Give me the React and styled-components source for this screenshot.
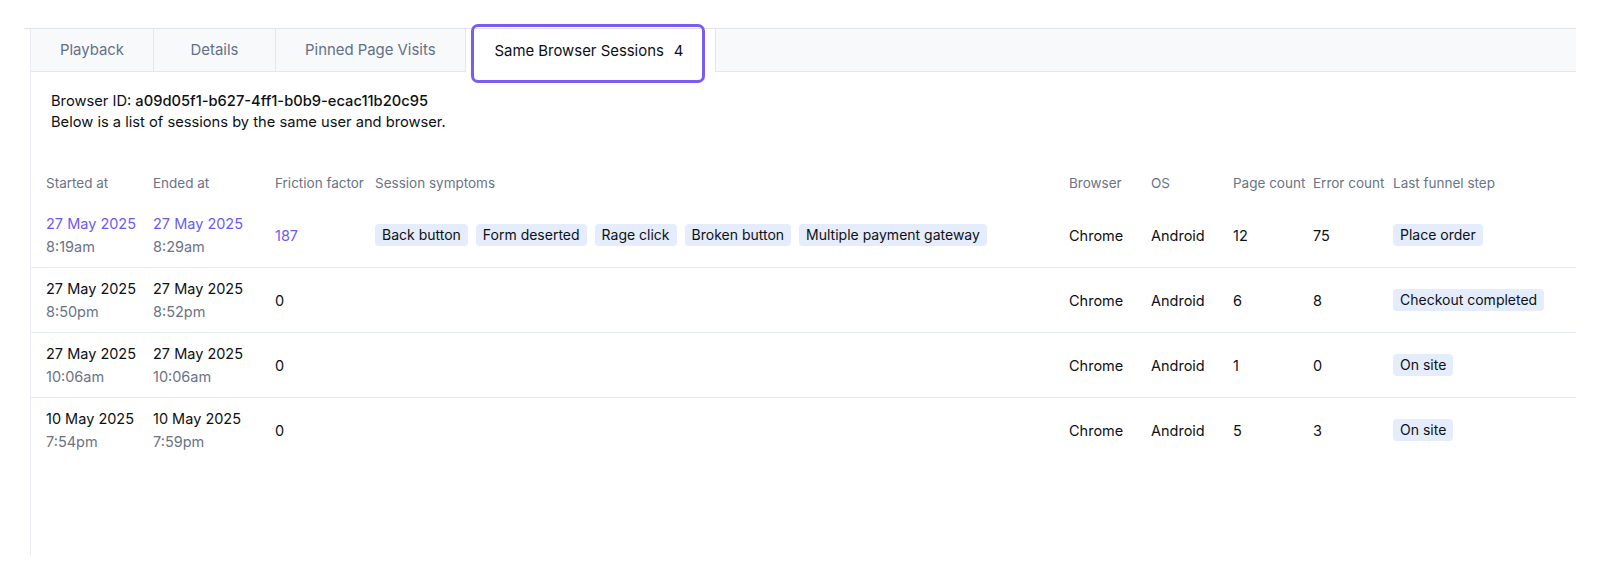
import React from 'react';
import styled, { createGlobalStyle } from 'styled-components';

const GlobalStyle = createGlobalStyle`
  body {
    margin: 0;
    background: #ffffff;
    font-family: Inter, "Noto Sans", sans-serif;
    color: #0d1015;
  }
`;

const tabs = [
  { label: 'Playback' },
  { label: 'Details' },
  { label: 'Pinned Page Visits' },
  { label: 'Same Browser Sessions', count: 4, active: true },
];

const columns = [
  'Started at',
  'Ended at',
  'Friction factor',
  'Session symptoms',
  'Browser',
  'OS',
  'Page count',
  'Error count',
  'Last funnel step',
];

const sessions = [
  {
    startDate: '27 May 2025', startTime: '8:19am',
    endDate: '27 May 2025', endTime: '8:29am',
    friction: 187, highlight: true,
    symptoms: ['Back button', 'Form deserted', 'Rage click', 'Broken button', 'Multiple payment gateway'],
    browser: 'Chrome', os: 'Android', pages: 12, errors: 75, step: 'Place order',
  },
  {
    startDate: '27 May 2025', startTime: '8:50pm',
    endDate: '27 May 2025', endTime: '8:52pm',
    friction: 0, symptoms: [],
    browser: 'Chrome', os: 'Android', pages: 6, errors: 8, step: 'Checkout completed',
  },
  {
    startDate: '27 May 2025', startTime: '10:06am',
    endDate: '27 May 2025', endTime: '10:06am',
    friction: 0, symptoms: [],
    browser: 'Chrome', os: 'Android', pages: 1, errors: 0, step: 'On site',
  },
  {
    startDate: '10 May 2025', startTime: '7:54pm',
    endDate: '10 May 2025', endTime: '7:59pm',
    friction: 0, symptoms: [],
    browser: 'Chrome', os: 'Android', pages: 5, errors: 3, step: 'On site',
  },
];

function App() {
  return (
    <>
      <GlobalStyle />
      <Page>
        <Frame>
          <Panel>
            <TabBar>
              {tabs.map((tab) => (
                <Tab key={tab.label} $active={tab.active}>
                  {tab.label}
                  {tab.count !== undefined && <TabCount>{tab.count}</TabCount>}
                  {tab.active && <FocusRing />}
                </Tab>
              ))}
            </TabBar>

            <Intro>
              <div>Browser ID: <strong>a09d05f1-b627-4ff1-b0b9-ecac11b20c95</strong></div>
              <div>Below is a list of sessions by the same user and browser.</div>
            </Intro>

            <Table>
              <HeadRow>
                {columns.map((c) => (
                  <HeadCell key={c}>{c}</HeadCell>
                ))}
              </HeadRow>
              {sessions.map((s, i) => (
                <Row key={i}>
                  <Cell>
                    <DateLine $highlight={s.highlight}>{s.startDate}</DateLine>
                    <TimeLine>{s.startTime}</TimeLine>
                  </Cell>
                  <Cell>
                    <DateLine $highlight={s.highlight}>{s.endDate}</DateLine>
                    <TimeLine>{s.endTime}</TimeLine>
                  </Cell>
                  <Cell>
                    <Friction $highlight={s.highlight}>{s.friction}</Friction>
                  </Cell>
                  <Cell>
                    <Badges>
                      {s.symptoms.map((sym) => (
                        <Badge key={sym}>{sym}</Badge>
                      ))}
                    </Badges>
                  </Cell>
                  <Cell>{s.browser}</Cell>
                  <Cell>{s.os}</Cell>
                  <Cell>{s.pages}</Cell>
                  <Cell>{s.errors}</Cell>
                  <Cell>
                    <Badge>{s.step}</Badge>
                  </Cell>
                </Row>
              ))}
            </Table>
          </Panel>
        </Frame>
      </Page>
    </>
  );
}

const Page = styled.div`
  padding: 28px 24px 0 24px;
`;

const Frame = styled.div`
  border-top: 1px solid #dfe3e8;
  padding-left: 6px;
`;

const Panel = styled.div`
  border-left: 1px solid #e9edf3;
  height: 526px;
`;

const TabBar = styled.div`
  display: flex;
  height: 42px;
  background: #f8f9fb;
  border-bottom: 1px solid #e3e8ef;
`;

const Tab = styled.div`
  position: relative;
  display: flex;
  align-items: center;
  justify-content: center;
  gap: 10px;
  min-width: 122px;
  padding: 0 29px;
  box-sizing: border-box;
  border-right: 1px solid #e3e8ef;
  font-size: 14.9px;
  color: ${(props) => (props.$active ? '#0d1015' : '#64708a')};
  background: ${(props) => (props.$active ? '#ffffff' : 'transparent')};
  margin-bottom: ${(props) => (props.$active ? '-1px' : '0')};
`;

const TabCount = styled.span`
  color: #0d1015;
  margin-right: 3px;
`;

const FocusRing = styled.span`
  position: absolute;
  left: 5px;
  right: 10px;
  top: -5px;
  bottom: -11px;
  border: 3px solid #7b5cf2;
  border-radius: 7px;
  pointer-events: none;
`;

const Intro = styled.div`
  padding: 19px 0 0 20px;
  font-size: 14.7px;
  line-height: 21px;
  color: #0d1015;

  strong {
    font-weight: 500;
  }
`;

const gridColumns = '107px 122px 100px 694px 82px 82px 80px 80px 1fr';

const Table = styled.div`
  margin-top: 30px;
`;

const HeadRow = styled.div`
  display: grid;
  grid-template-columns: ${gridColumns};
  align-items: center;
  height: 40px;
  padding-left: 15px;
`;

const HeadCell = styled.div`
  font-size: 13.5px;
  color: #6b7487;
  white-space: nowrap;
`;

const Row = styled.div`
  display: grid;
  grid-template-columns: ${gridColumns};
  align-items: center;
  height: 64px;
  padding-left: 15px;

  & + & {
    border-top: 1px solid #e6ebf3;
  }
`;

const Cell = styled.div`
  font-size: 14.5px;
  color: #0d1015;
  white-space: nowrap;
`;

const DateLine = styled.div`
  line-height: 23px;
  color: ${(props) => (props.$highlight ? '#6c5cf2' : '#0d1015')};
`;

const TimeLine = styled.div`
  line-height: 23px;
  color: #6b7487;
`;

const Friction = styled.span`
  color: ${(props) => (props.$highlight ? '#6c5cf2' : '#0d1015')};
`;

const Badges = styled.div`
  display: flex;
  gap: 8px;
`;

const Badge = styled.span`
  display: inline-block;
  padding: 0 7px;
  height: 22px;
  line-height: 22px;
  border-radius: 4px;
  background: #e5edfd;
  font-size: 14px;
  color: #0d1015;
`;

export default App;
